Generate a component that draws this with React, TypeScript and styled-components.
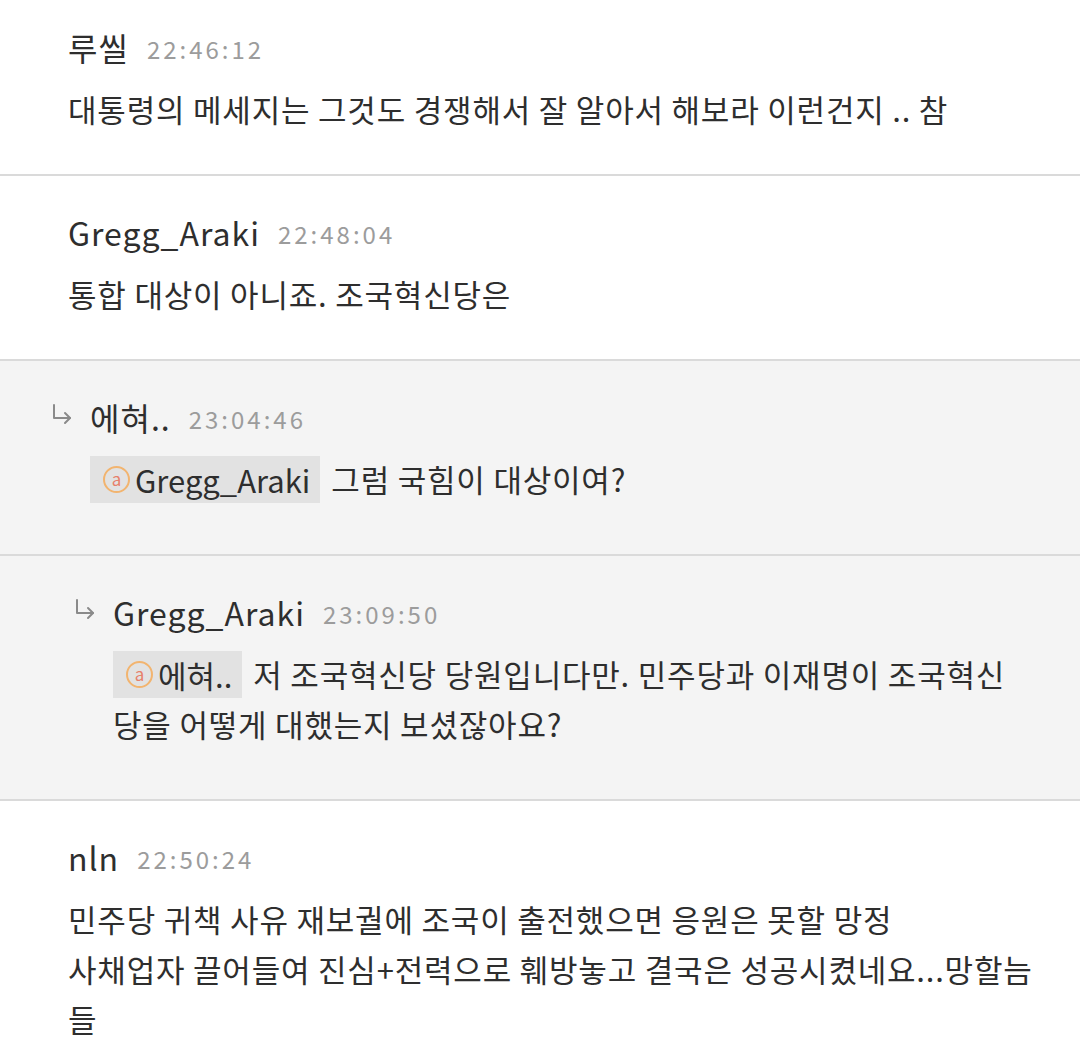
import styled, { createGlobalStyle } from "styled-components";

const GlobalStyle = createGlobalStyle`
  html, body {
    margin: 0;
    padding: 0;
    background: #ffffff;
  }
  body {
    font-family: "Noto Sans CJK KR", "Noto Sans", sans-serif;
    color: #2e2e2e;
  }
`;

const Thread = styled.div`
  width: 1080px;
  height: 1062px;
  overflow: hidden;
`;

const Comment = styled.section<{ $reply: boolean; $first?: boolean }>`
  display: flex;
  align-items: flex-start;
  padding: ${(p) => (p.$first ? "24px" : "33px")} 16px ${(p) => (p.$reply ? "50px" : "40px")} 0;
  background: ${(p) => (p.$reply ? "#f4f4f4" : "#ffffff")};
  border-bottom: 2px solid #dadada;
`;

const Indent = styled.div<{ $depth: number }>`
  flex: none;
  display: flex;
  justify-content: flex-end;
  width: ${(p) => (p.$depth === 0 ? 68 : p.$depth === 1 ? 90 : 113)}px;
  padding-top: 12px;
`;

const ReplyArrow = styled.svg`
  width: 22px;
  height: 22px;
  margin-right: 17px;
  margin-top: -3px;
`;

const Body = styled.div`
  flex: 1;
  min-width: 0;
`;

const Header = styled.div`
  display: flex;
  align-items: baseline;
  gap: 18px;
  height: 46px;
  line-height: 46px;
`;

const Name = styled.span`
  font-size: 32px;
  letter-spacing: 1px;
  color: #2e2e2e;
`;

const Time = styled.span`
  font-size: 24px;
  letter-spacing: 3px;
  color: #9c9c9c;
  position: relative;
  top: -2px;
`;

const Text = styled.div`
  margin-top: 14px;
  font-size: 31px;
  line-height: 50px;
  letter-spacing: 0.8px;
  color: #2e2e2e;
  white-space: nowrap;
`;

const Mention = styled.span`
  display: inline-flex;
  align-items: center;
  gap: 5px;
  height: 47px;
  margin-top: 2px;
  margin-right: 11px;
  padding: 0 10px 0 13px;
  vertical-align: top;
  background: #e2e2e2;
  line-height: 47px;
  letter-spacing: 0;
`;

const AtBadge = styled.span`
  display: inline-flex;
  align-items: center;
  justify-content: center;
  box-sizing: border-box;
  width: 27px;
  height: 27px;
  border: 2px solid #f2b46f;
  border-radius: 50%;
  font-size: 17px;
  line-height: 1;
  color: #e7806a;
  padding-bottom: 3px;
`;

function Arrow() {
  return (
    <ReplyArrow viewBox="0 0 22 22" fill="none" stroke="#8a8a8a" strokeWidth="2" strokeLinecap="round" strokeLinejoin="round">
      <path d="M3 2 V15 H19" />
      <path d="M14 10 L19 15 L14 20" />
    </ReplyArrow>
  );
}

function Tag({ name }: { name: string }) {
  return (
    <Mention>
      <AtBadge>a</AtBadge>
      {name}
    </Mention>
  );
}

interface CommentProps {
  name: string;
  time: string;
  depth: number;
  first?: boolean;
  children: React.ReactNode;
}

function CommentItem({ name, time, depth, first, children }: CommentProps) {
  return (
    <Comment $reply={depth > 0} $first={first}>
      <Indent $depth={depth}>{depth > 0 && <Arrow />}</Indent>
      <Body>
        <Header>
          <Name>{name}</Name>
          <Time>{time}</Time>
        </Header>
        <Text>{children}</Text>
      </Body>
    </Comment>
  );
}

export default function App() {
  return (
    <>
      <GlobalStyle />
      <Thread>
        <CommentItem name="루씰" time="22:46:12" depth={0} first>
          대통령의 메세지는 그것도 경쟁해서 잘 알아서 해보라 이런건지 .. 참
        </CommentItem>
        <CommentItem name="Gregg_Araki" time="22:48:04" depth={0}>
          통합 대상이 아니죠. 조국혁신당은
        </CommentItem>
        <CommentItem name="에혀.." time="23:04:46" depth={1}>
          <Tag name="Gregg_Araki" />
          그럼 국힘이 대상이여?
        </CommentItem>
        <CommentItem name="Gregg_Araki" time="23:09:50" depth={2}>
          <Tag name="에혀.." />
          저 조국혁신당 당원입니다만. 민주당과 이재명이 조국혁신
          <br />
          당을 어떻게 대했는지 보셨잖아요?
        </CommentItem>
        <CommentItem name="nln" time="22:50:24" depth={0}>
          민주당 귀책 사유 재보궐에 조국이 출전했으면 응원은 못할 망정
          <br />
          사채업자 끌어들여 진심+전력으로 훼방놓고 결국은 성공시켰네요...망할늠
          <br />들
        </CommentItem>
      </Thread>
    </>
  );
}
